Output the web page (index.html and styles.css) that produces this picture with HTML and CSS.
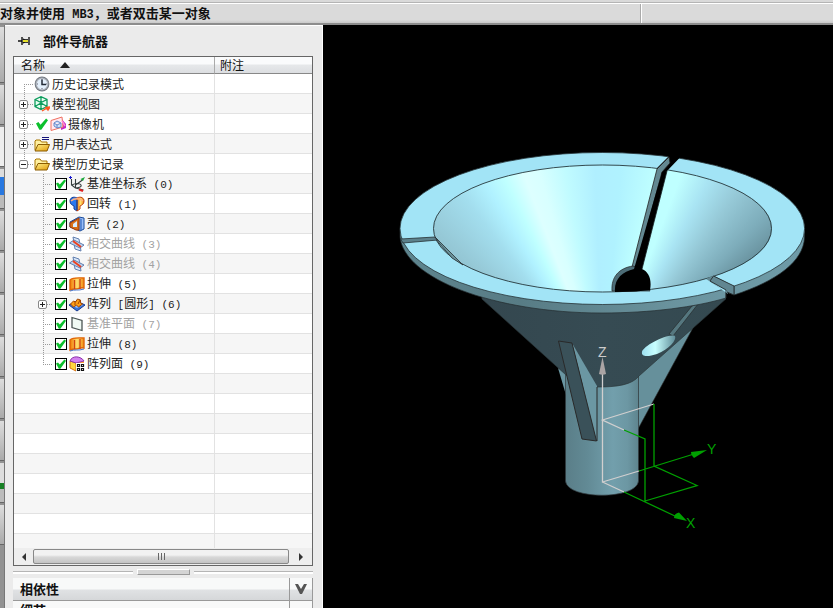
FILE: index.html
```html
<!DOCTYPE html>
<html lang="zh-CN">
<head>
<meta charset="utf-8">
<title>部件导航器</title>
<link rel="stylesheet" href="styles.css">
</head>
<body>
<svg class="sprite" aria-hidden="true">
  <defs>
    <linearGradient id="gold" x1="0" y1="0" x2="1" y2="1"><stop offset="0" stop-color="#fff08a"/><stop offset="1" stop-color="#e09a08"/></linearGradient>
    <linearGradient id="orange"><stop offset="0" stop-color="#f07800"/><stop offset=".5" stop-color="#ffe070"/><stop offset="1" stop-color="#f08a10"/></linearGradient>
    <linearGradient id="blue"><stop offset="0" stop-color="#1848b8"/><stop offset="1" stop-color="#a8ccff"/></linearGradient>
    <symbol id="i-clock" viewBox="0 0 16 16"><circle cx="8" cy="8" r="7.4" fill="#737982"/><circle cx="8" cy="8" r="6.4" fill="#adb3bb"/><circle cx="8" cy="8" r="5.2" fill="#e4f0fc"/><path d="M8 3.500V8.500H12" fill="none" stroke="#222a36" stroke-width="1.500"/><path d="M8 3v1M3 8h1M8 12v1M12 8h1" stroke="#667"/></symbol>
    <symbol id="i-views" viewBox="0 0 16 16"><path d="M1 3.500L7 .700L13 3.500V10.500L7 13.500L1 10.500ZM1 3.500L7 6.500L13 3.500M7 1V13M1 10.500L7 7L13 10.500" fill="#e4fff0" stroke="#0c9c5c" stroke-width="1.300"/><path d="M8 15l5-3M12 11.500l4-.500l-2 3z" fill="#ff5520" stroke="#ff5520" stroke-width="1.400"/></symbol>
    <symbol id="i-camera" viewBox="0 0 16 16"><path d="M11 2l5 6v4l-5 2z" fill="#c428c8"/><path d="M1 4.500L12 1L13 11L1 14.500Z" fill="#ffeaf2" stroke="#f07060"/><path d="M4 7l3-2 4 2v4l-4 1-3-2zM4 7l3 2 4-2M7 9v3" fill="#c8e4ff" stroke="#6a88c8"/><path d="M12 5l3 5" stroke="#ff8ad0" stroke-width="1.500"/></symbol>
    <symbol id="i-folder" viewBox="0 0 16 16"><path d="M1 13V4l1-1h4l1.500 2H13v3" fill="#fff0a0" stroke="#a87400"/><path d="M1 14L4 7.500H15.500L13 14Z" fill="url(#gold)" stroke="#8a5a00"/></symbol>
    <symbol id="i-expression" viewBox="0 0 16 16"><path d="M1 14V5l1-1h4l1.500 2H13v3" fill="#fff0a0" stroke="#a87400"/><path d="M1 15L4 8.500H15.500L13 15Z" fill="url(#gold)" stroke="#8a5a00"/><path d="M8 1.500h7M8 3.500h7" stroke="#16167c"/></symbol>
    <symbol id="i-csys" viewBox="0 0 16 16"><path d="M2.500 3v6l4 3 8 2M6.500 12l0-9M6.500 9l7-5M3 9c3-2 8-2 9 0s-3 3-6 3" fill="none" stroke="#343c3c" stroke-width="1.100"/><path d="M0 1.500h3M1.500 0v3" stroke="#1818d0"/><path d="M11.500 3l2.500 2 2-4z" fill="#18a838"/><path d="M10 13.500l4 1.500" stroke="#e02020" stroke-width="2"/></symbol>
    <symbol id="i-revolve" viewBox="0 0 16 16"><path d="M8 2C4 0 1 2 1 5s2 4 4 5v3l3 2z" fill="#2878f0" stroke="#143c94"/><path d="M8 2c4-2 7 0 7 3s-2 4-4 5v3l-3 2z" fill="url(#orange)" stroke="#c04010"/><path d="M2 5c3-3 9-3 12 0" fill="none" stroke="#ffb080" stroke-width="1.500"/><path d="M8 4v10" stroke="#1c4ca0" stroke-width="1.400"/></symbol>
    <symbol id="i-shell" viewBox="0 0 16 16"><path d="M1 6L10 1l5 1v11l-4 2-10-4z" fill="url(#blue)" stroke="#174a9c"/><path d="M1 7l9-5v12l-3 0-6-3z" fill="#d87018" stroke="#a03c0c"/><path d="M4 8l4-3v6l-4 0z" fill="#d8edff"/><path d="M12 3v11" stroke="#2860b8"/></symbol>
    <symbol id="i-curve" viewBox="0 0 16 16"><path d="M4 1l6 2 2 12-6-2z" fill="#dce9fb" stroke="#607eae"/><path d="M.500 7L5 4l10 5-4 3z" fill="#b5cfef" fill-opacity=".8" stroke="#607eae"/><path d="M4 5l8 6" stroke="#ef4220" stroke-width="2"/></symbol>
    <symbol id="i-extrude" viewBox="0 0 16 16"><path d="M1 4C4 1 10 2 15 2v10c-4-1-5 1-8 1s-4 0-6 1z" fill="url(#orange)" stroke="#e06608" stroke-width="1.400"/><path d="M5.500 4v9M11 3v10" stroke="#d04410" stroke-width="1.300"/><path d="M1 15c5-2 8 0 14-2" fill="none" stroke="#4878d0"/></symbol>
    <symbol id="i-pattern" viewBox="0 0 16 16"><path d="M0 9l8-4 8 4-8 6z" fill="#3974d8" stroke="#173b91"/><path d="M2 9l6-3 6 3-6 3z" fill="#90bcff"/><path d="M1.500 8l3-3 2 1 2-3 3 1v3l2 1-4 3-2-2-3 2z" fill="#ffa018" stroke="#a34604"/><path d="M6 9V6M9 8l2-4" stroke="#a34604"/></symbol>
    <symbol id="i-plane" viewBox="0 0 16 16"><path d="M3 1.500l10 3v10l-10-3z" fill="#f0faf4" stroke="#4c5654" stroke-width="1.300"/></symbol>
    <symbol id="i-patternface" viewBox="0 0 16 16"><path d="M1 5l6 2v8l-6-3z" fill="#ffd640" stroke="#d87010"/><path d="M7 7l8-2v8l-8 2z" fill="#ffa434"/><path d="M1 5c2-6 11-5 14 0L7 7z" fill="#d280f0" stroke="#8b35aa"/><path d="M7 7h9v9H7z" fill="#fff"/><path d="M8.500 8.500h2v2h-2zM12.500 8.500h2v2h-2zM8.500 12.500h2v2h-2zM12.500 12.500h2v2h-2z" fill="#fff" stroke="#111" stroke-width="1.200"/></symbol>
  </defs>
</svg>

<header class="statusbar">
  <p class="prompt">对象并使用<span class="latin"> MB3</span>，或者双击某一对象</p>
  <div class="status-cell"></div>
</header>

<div class="workspace">
  <aside class="resource-bar" aria-hidden="true">
    <i class="slot tall"></i><i class="slot"></i><i class="slot active"></i><i class="slot accent"></i><i class="slot"></i><i class="slot"></i><i class="slot"></i><i class="slot"></i><i class="slot"></i><i class="slot"></i><i class="slot green"></i><i class="slot"></i>
  </aside>

  <section class="navigator">
    <div class="title">
      <svg class="pin" viewBox="0 0 12 10" aria-hidden="true"><path d="M0 5h4" stroke="#000" stroke-width="1.400"/><path d="M4 1v8M5 3l2 1h3M5 7l2-1h3M11 1v8" fill="none" stroke="#000" stroke-width="1.300"/><path d="M5 4h5v2H5z" fill="#e6e02a"/></svg>
      <h1>部件导航器</h1>
    </div>

    <div class="tree-box">
      <div class="tree-view">
        <table class="tree">
          <thead><tr><th class="name-col" scope="col">名称<span class="sort"></span></th><th scope="col">附注</th></tr></thead>
          <tbody>
            <tr><td><div class="node root first"><span class="guide"></span><svg class="icon"><use href="#i-clock"/></svg><span class="label">历史记录模式</span></div></td><td></td></tr>
            <tr><td><div class="node root"><span class="guide"><button class="toggle plus" aria-label="展开模型视图"></button></span><svg class="icon"><use href="#i-views"/></svg><span class="label">模型视图</span></div></td><td></td></tr>
            <tr><td><div class="node root"><span class="guide"><button class="toggle plus" aria-label="展开摄像机"></button></span><span class="tick"></span><svg class="icon"><use href="#i-camera"/></svg><span class="label">摄像机</span></div></td><td></td></tr>
            <tr><td><div class="node root"><span class="guide"><button class="toggle plus" aria-label="展开用户表达式"></button></span><svg class="icon"><use href="#i-expression"/></svg><span class="label">用户表达式</span></div></td><td></td></tr>
            <tr><td><div class="node root last"><span class="guide"><button class="toggle" aria-label="折叠模型历史记录"></button></span><svg class="icon"><use href="#i-folder"/></svg><span class="label">模型历史记录</span></div></td><td></td></tr>
            <tr><td><div class="node child"><span class="guide"></span><input type="checkbox" id="f0" checked><svg class="icon"><use href="#i-csys"/></svg><label class="label" for="f0">基准坐标系<span class="latin"> (0)</span></label></div></td><td></td></tr>
            <tr><td><div class="node child"><span class="guide"></span><input type="checkbox" id="f1" checked><svg class="icon"><use href="#i-revolve"/></svg><label class="label" for="f1">回转<span class="latin"> (1)</span></label></div></td><td></td></tr>
            <tr><td><div class="node child"><span class="guide"></span><input type="checkbox" id="f2" checked><svg class="icon"><use href="#i-shell"/></svg><label class="label" for="f2">壳<span class="latin"> (2)</span></label></div></td><td></td></tr>
            <tr><td><div class="node child muted"><span class="guide"></span><input type="checkbox" id="f3" checked><svg class="icon"><use href="#i-curve"/></svg><label class="label" for="f3">相交曲线<span class="latin"> (3)</span></label></div></td><td></td></tr>
            <tr><td><div class="node child muted"><span class="guide"></span><input type="checkbox" id="f4" checked><svg class="icon"><use href="#i-curve"/></svg><label class="label" for="f4">相交曲线<span class="latin"> (4)</span></label></div></td><td></td></tr>
            <tr><td><div class="node child"><span class="guide"></span><input type="checkbox" id="f5" checked><svg class="icon"><use href="#i-extrude"/></svg><label class="label" for="f5">拉伸<span class="latin"> (5)</span></label></div></td><td></td></tr>
            <tr><td><div class="node child"><span class="guide"><button class="toggle plus" aria-label="展开阵列"></button></span><input type="checkbox" id="f6" checked><svg class="icon"><use href="#i-pattern"/></svg><label class="label" for="f6">阵列<span class="latin"> [</span>圆形<span class="latin">] (6)</span></label></div></td><td></td></tr>
            <tr><td><div class="node child muted"><span class="guide"></span><input type="checkbox" id="f7" checked><svg class="icon"><use href="#i-plane"/></svg><label class="label" for="f7">基准平面<span class="latin"> (7)</span></label></div></td><td></td></tr>
            <tr><td><div class="node child"><span class="guide"></span><input type="checkbox" id="f8" checked><svg class="icon"><use href="#i-extrude"/></svg><label class="label" for="f8">拉伸<span class="latin"> (8)</span></label></div></td><td></td></tr>
            <tr><td><div class="node child last"><span class="guide"></span><input type="checkbox" id="f9" checked><svg class="icon"><use href="#i-patternface"/></svg><label class="label" for="f9">阵列面<span class="latin"> (9)</span></label></div></td><td></td></tr>
          </tbody>
        </table>
      </div>
      <div class="scrollbar">
        <button class="arrow left" aria-label="向左滚动"></button>
        <div class="thumb"><i></i><i></i><i></i></div>
        <button class="arrow right" aria-label="向右滚动"></button>
      </div>
    </div>

    <div class="splitter"><span class="grip"></span></div>

    <div class="section">
      <h2>相依性</h2>
      <button class="expand" aria-label="展开相依性"><svg viewBox="0 0 12 10"><path d="M0 0h3l3 5 3-5h3L7 10H5z" fill="#555"/></svg></button>
    </div>
    <div class="section">
      <h2>细节</h2>
      <button class="expand" aria-label="展开细节"><svg viewBox="0 0 12 10"><path d="M0 0h3l3 5 3-5h3L7 10H5z" fill="#555"/></svg></button>
    </div>
  </section>

  <main class="viewport">
    <svg class="model" viewBox="323 25 510 583" preserveAspectRatio="xMinYMin meet" role="img" aria-label="漏斗模型">
      <defs>
        <linearGradient id="tube"><stop offset="0" stop-color="#5a7e88"/><stop offset=".3" stop-color="#628a95"/><stop offset=".65" stop-color="#729fac"/><stop offset=".85" stop-color="#6c97a3"/><stop offset="1" stop-color="#5e848e"/></linearGradient>
        <linearGradient id="edge"><stop offset="0" stop-color="#5e858f"/><stop offset=".3" stop-color="#587c85"/><stop offset=".7" stop-color="#6b949f"/><stop offset="1" stop-color="#6e9ba8"/></linearGradient>
        <linearGradient id="cone"><stop offset="0" stop-color="#34474f"/><stop offset=".5" stop-color="#364b53"/><stop offset="1" stop-color="#344950"/></linearGradient>
        <linearGradient id="hole"><stop offset="0" stop-color="#9ee0f0"/><stop offset=".4" stop-color="#c8ffff"/><stop offset="1" stop-color="#608d99"/></linearGradient>
      </defs>
      <path d="M558 368L566 395V372Z" fill="#6a96a2"/>
      <path d="M694 326L638 429V372Z" fill="#66909b" stroke="#2a2a2a" stroke-width=".6"/>
      <path d="M565.500 365V481C567 500 637 500 638.500 481V365Z" fill="url(#tube)" stroke="#303a3d" stroke-width=".7"/>
      <path d="M482 299L566 375C575 383 586 386 597 387C617 387 632 385 639 376L728 297L725 280H482Z" fill="url(#cone)" stroke="#2b3639" stroke-width=".7"/>
      <path d="M692 306L698 304L673 336L669 334Z" fill="#55777f" stroke="#252b2d" stroke-width=".7"/>
      <path d="M642 352C643 346 668 333 675 336C677 340 669 349 657 354C648 357 641 357 642 352Z" fill="url(#hole)"/>
      <path d="M572 343L597 386V440Z" fill="#6b97a3"/>
      <path d="M558.500 341L572 343L596.500 441L582 439Z" fill="#3a5159" stroke="#292929"/>
      <path d="M597 387V441" stroke="#292929"/>

      <path d="M400 229V237C404 278 493 313 602 313C651 313 696 307 726 298V288L734 286V295C777 281 804 261 804.500 237V229Z" fill="url(#edge)" stroke="#222b2e" stroke-width=".7"/>
      <path d="M726 290L734 295V310H726Z" fill="#000"/>
      <ellipse cx="602.300" cy="228.500" rx="202.300" ry="76" fill="#a2e4f6" stroke="#263236" stroke-width=".8"/>
      <foreignObject x="433" y="165" width="339" height="127"><div xmlns="http://www.w3.org/1999/xhtml" class="bowl"></div></foreignObject>
      <ellipse cx="602.500" cy="228.500" rx="169" ry="63.500" fill="none" stroke="#26383c" stroke-width=".9"/>

      <path d="M669 156L669 150H684L679 158.500L667 171L661 175L657 168Z" fill="#000"/>
      <path d="M657 169L669 157L670 163L662 172L636 269L632 267Z" fill="#638891" stroke="#222" stroke-width=".8"/>
      <path d="M612 291C611 277 619 268 633 266L640 268L650 291Z" fill="#4d6d77" stroke="#222" stroke-width=".7"/>
      <path d="M615 292C614 279 622 272 634 269L662 172L667 171L642 269C649 272 652 280 650 290L636 291.500Z" fill="#000"/>
      <path d="M667 171L642 269" stroke="#172022" stroke-width=".8"/>
      <path d="M400.500 239L435 237L438 240L403 243Z" fill="#5c818c" stroke="#253033" stroke-width=".8"/>
      <path d="M435 237L463 265L452 258L439 243Z" fill="#6a929a" stroke="#283135" stroke-width=".8"/>
      <path d="M706 279L713.500 275.500L734 286V295L726 292Z" fill="#618691"/>
      <path d="M706 279L710 281L728 294L726 290Z" fill="#a2e4f6"/>
      <path d="M713.500 276L734 286V295M710 281L726 290V298M713.500 276L710 281M727 292L734 295" fill="none" stroke="#252b2d" stroke-width=".9"/>

      <g fill="none" stroke="#d1cfcf" stroke-width="1.300"><path d="M602.500 372V482L639 471M602.500 482L624 492M624 430L602.500 420L654 404"/></g>
      <g fill="none" stroke="#00a000" stroke-width="1.300"><path d="M639 471L694 454M624 492L677 517M624 430L645 439V501L697 485.500L654 466V404"/></g>
      <path d="M602.500 357L599 374C601 375 604 375 606 374Z" fill="#aaa4a4"/>
      <path d="M707 450L691 452C691 454 692 456 694 458ZM687 521L674 518C674 515 676 513 679 512.500Z" fill="#00a000"/>
      <g class="axis-labels"><text x="598" y="357" class="axis-z">Z</text><text x="707" y="454">Y</text><text x="686" y="528">X</text></g>
    </svg>
  </main>
</div>
</body>
</html>
```
FILE: styles.css
```css
* { box-sizing: border-box; }

body {
  display: flex;
  flex-direction: column;
  height: 100vh;
  margin: 0;
  overflow: hidden;
  background: #ebebeb;
  color: #222;
  font: 12px/16px "Noto Sans CJK SC", sans-serif;
}

.sprite { position: absolute; width: 0; height: 0; }
h1, h2, p { margin: 0; }
h1, h2 { font-size: 13px; line-height: 16px; font-weight: 700; color: #111; }
button { padding: 0; border: 0; background: none; }
.latin { font-family: "Liberation Mono", monospace; font-size: 11px; white-space: pre; }

/* Prompt line */
.statusbar {
  display: flex;
  flex: none;
  height: 25px;
  padding-top: 4px;
  border-bottom: 2px solid #8c8c8c;
  background: linear-gradient(#d9d9d9 2px, #b4b4b4 2px 3px, #fff 3px 4px, #dadada 4px 20px, #c9c9c9);
}
.prompt {
  flex: 0 0 77%;
  overflow: hidden;
  border-right: 1px solid #aaa;
  color: #111;
  font-size: 13px;
  font-weight: 700;
  line-height: 18px;
  white-space: nowrap;
}
.prompt .latin { font-size: 12px; }
.status-cell { flex: 1; border-left: 1px solid #fff; }

.workspace { display: flex; flex: 1; min-height: 0; }

/* Edge of the resource toolbar */
.resource-bar {
  display: flex;
  flex: 0 0 5px;
  flex-direction: column;
  gap: 2px;
  padding-top: 2px;
  overflow: hidden;
  border-right: 1px solid #777;
  background: #929292;
}
.slot { flex: 0 0 40px; border-bottom: 1px solid #666; background: linear-gradient(#ddd, #aaa); }
.slot.tall { flex-basis: 56px; }
.slot.active { background: #eee; }
.slot.accent { background: linear-gradient(#ddd 8px, #2878e0 8px 26px, #bbb 26px); }
.slot.green { background: linear-gradient(#ddd 20px, #168024 20px 26px, #bbb 26px); }

/* Navigator */
.navigator {
  display: flex;
  flex: 0 0 318px;
  flex-direction: column;
  padding: 0 9px 0 8px;
  overflow: hidden;
  border-top: 1px solid #fff;
  border-right: 1px solid #fff;
  background: #ebebeb;
}
.title { display: flex; flex: none; align-items: center; gap: 13px; height: 30px; padding-left: 5px; }
.pin { width: 12px; height: 10px; }

.tree-box {
  display: flex;
  flex: 1;
  flex-direction: column;
  min-height: 0;
  border: 1px solid #666;
  background: #fff;
}
.tree-view {
  flex: 1;
  min-height: 0;
  overflow: hidden;
  background:
    linear-gradient(#e2e2e2, #e2e2e2) 200px 0 / 1px 100% no-repeat,
    repeating-linear-gradient(#fff 0 19px, #e2e2e2 19px 20px, #f6f6f6 20px 39px, #e2e2e2 39px 40px) 0 17px;
}
.tree { width: 100%; border-spacing: 0; table-layout: fixed; }
.tree th {
  height: 17px;
  padding: 0 0 0 5px;
  border-bottom: 1px solid #888;
  background: linear-gradient(#fafbfc 0 7px, #e6e8ea 8px, #dcdee1);
  color: #111;
  font-weight: 400;
  line-height: 16px;
  text-align: left;
}
.tree .name-col { width: 201px; padding-left: 7px; border-right: 1px solid #aaa; }
.tree td { height: 20px; padding: 0; }
.sort {
  display: inline-block;
  margin-left: 15px;
  border: 5px solid transparent;
  border-top: 0;
  border-bottom: 6px solid #222;
  vertical-align: 2px;
}

.node { display: flex; align-items: center; height: 20px; }
.guide { position: relative; display: flex; flex: none; align-items: center; align-self: stretch; }
.root .guide { width: 20px; padding-left: 5px; }
.child .guide { width: 41px; padding-left: 24px; }
.guide::before, .guide::after { content: ""; position: absolute; }
.guide::before { top: 0; bottom: 0; width: 1px; background: repeating-linear-gradient(#999 0 1px, transparent 1px 2px); }
.guide::after { top: 10px; height: 1px; background: repeating-linear-gradient(90deg, #999 0 1px, transparent 1px 2px); }
.root .guide::before { left: 10px; }
.root .guide::after { left: 10px; width: 9px; }
.child .guide::before { left: 29px; }
.child .guide::after { left: 29px; width: 10px; }
.first .guide::before { top: 10px; }
.last .guide::before { bottom: 10px; }

.toggle {
  z-index: 1;
  width: 9px;
  height: 9px;
  border: 1px solid #888;
  border-radius: 2px;
  background: linear-gradient(#222, #222) center / 5px 1px no-repeat, #fff;
}
.toggle.plus {
  background:
    linear-gradient(#222, #222) center / 5px 1px no-repeat,
    linear-gradient(#222, #222) center / 1px 5px no-repeat,
    #fff;
}

.icon { flex: none; width: 16px; height: 16px; }
.label { margin-left: 2px; white-space: nowrap; }
.muted .label { color: #a2a2a2; }

.child input {
  flex: none;
  width: 12px;
  height: 12px;
  margin: 0 2px 0 0;
  border: 1px solid #000;
  background: #fff;
  appearance: none;
}
.child input:checked::before, .tick {
  content: "";
  display: block;
  width: 10px;
  height: 10px;
  background: #0cc02c;
  clip-path: polygon(0 45%, 20% 34%, 38% 56%, 84% 4%, 100% 18%, 44% 98%, 28% 98%);
}
.tick { flex: none; width: 12px; height: 12px; margin: 0 2px; }

/* Horizontal scroll bar */
.scrollbar { display: flex; flex: none; align-items: center; height: 17px; background: #eee; }
.arrow { flex: 0 0 19px; height: 15px; }
.arrow.right { flex-basis: 23px; }
.arrow::before { content: ""; display: block; width: 0; margin: auto; border: 4px solid transparent; }
.arrow.left::before { border-left: 0; border-right-color: #333; }
.arrow.right::before { border-right: 0; border-left-color: #333; }
.thumb {
  display: flex;
  flex: 1;
  align-items: center;
  justify-content: center;
  gap: 2px;
  height: 15px;
  border: 1px solid #888;
  border-radius: 2px;
  background: linear-gradient(#f2f2f2 0 5px, #d8d8d8 7px, #c4c4c4);
}
.thumb i { width: 1px; height: 7px; background: #666; }

.splitter { display: flex; flex: none; align-items: center; gap: 4px; height: 12px; }
.splitter::before, .splitter::after { content: ""; flex: 1; height: 2px; border-top: 1px solid #b5b5b5; background: #fff; }
.grip { width: 53px; height: 6px; border: 1px solid #999; border-top-color: #fff; border-left-color: #fff; background: #d4d4d4; }

.section {
  display: flex;
  flex: none;
  align-items: center;
  height: 23px;
  border-right: 1px solid #999;
  border-bottom: 1px solid #999;
  background: linear-gradient(#f8f9f9 0 11px, #e0e2e4 12px, #d5d7d9);
}
.section:last-child { height: 7px; align-items: flex-start; border-bottom: 0; }
.section h2 { flex: 1; padding-left: 7px; }
.section:last-child h2 { padding-top: 1px; }
.expand { align-self: stretch; width: 23px; border-left: 1px solid #999; }
.expand svg { width: 12px; height: 10px; }
.section:last-child .expand svg { display: none; }

/* Graphics window */
.viewport { flex: 1; min-width: 0; overflow: hidden; background: #000; }
.model { display: block; width: 100%; height: 100%; }
.bowl {
  width: 100%;
  height: 100%;
  border-radius: 50%;
  background: conic-gradient(from 300deg at 50% 169%,
    #86b6c3 0deg, #96c9d7 12deg, #a3deee 23deg, #b0f1ff 29deg,
    #bfffff 34deg, #ddffff 39deg, #d8ffff 43deg, #c0fbff 50deg,
    #b0efff 58deg, #b0f2ff 65deg, #bfffff 75deg, #bfffff 81deg,
    #a9e4f3 88deg, #95c8d6 96deg, #7dacba 105deg, #618894 114deg, #618894 360deg);
}
.axis-labels { fill: #00a000; font: 14px "Liberation Sans", sans-serif; }
.axis-z { fill: #ccc; }
```
